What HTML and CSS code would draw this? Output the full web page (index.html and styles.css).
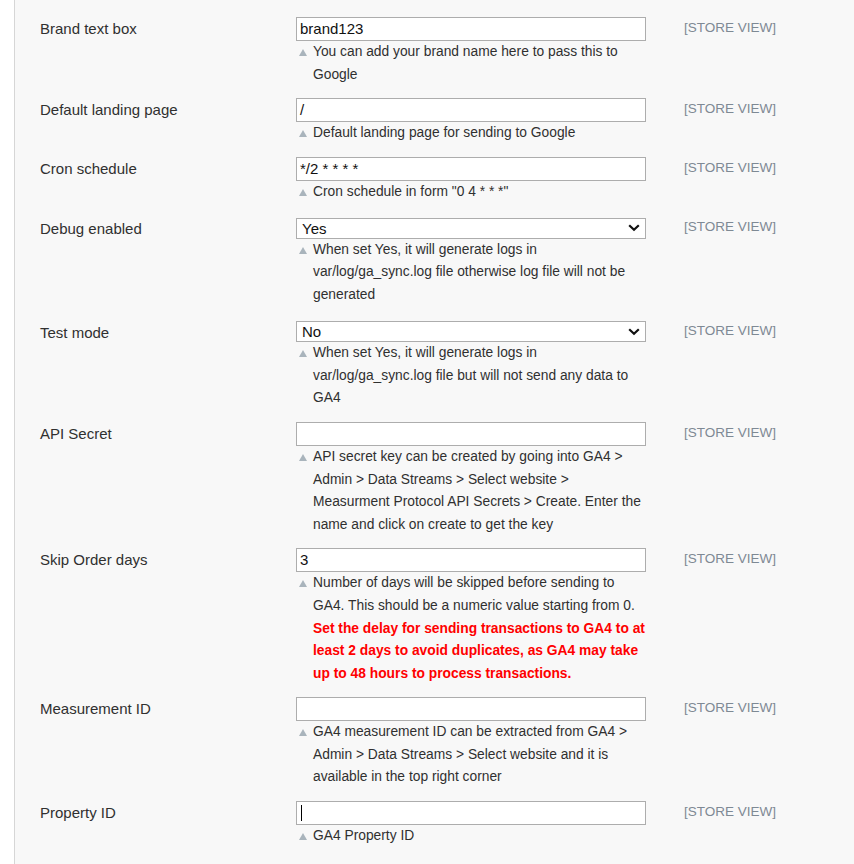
FILE: index.html
```html
<!DOCTYPE html>
<html>
<head>
<meta charset="utf-8">
<link rel="stylesheet" href="styles.css">
</head>
<body>
<div class="panel">
  <div class="row">
    <div class="label">Brand text box</div>
    <div class="control">
      <div class="input">brand123</div>
      <p class="note">You can add your brand name here to pass this to Google</p>
    </div>
    <div class="scope">[STORE VIEW]</div>
  </div>
  <div class="row">
    <div class="label">Default landing page</div>
    <div class="control">
      <div class="input">/</div>
      <p class="note">Default landing page for sending to Google</p>
    </div>
    <div class="scope">[STORE VIEW]</div>
  </div>
  <div class="row">
    <div class="label">Cron schedule</div>
    <div class="control">
      <div class="input">*/2 * * * *</div>
      <p class="note">Cron schedule in form "0 4 * * *"</p>
    </div>
    <div class="scope">[STORE VIEW]</div>
  </div>
  <div class="row row-select">
    <div class="label">Debug enabled</div>
    <div class="control">
      <div class="select"><span>Yes</span><svg class="chev" width="12" height="8" viewBox="0 0 12 8"><path d="M1.2 1.2 L6 5.8 L10.8 1.2" fill="none" stroke="#111" stroke-width="2.2"/></svg></div>
      <p class="note">When set Yes, it will generate logs in var/log/ga_sync.log file otherwise log file will not be generated</p>
    </div>
    <div class="scope">[STORE VIEW]</div>
  </div>
  <div class="row row-select">
    <div class="label">Test mode</div>
    <div class="control">
      <div class="select"><span>No</span><svg class="chev" width="12" height="8" viewBox="0 0 12 8"><path d="M1.2 1.2 L6 5.8 L10.8 1.2" fill="none" stroke="#111" stroke-width="2.2"/></svg></div>
      <p class="note">When set Yes, it will generate logs in var/log/ga_sync.log file but will not send any data to GA4</p>
    </div>
    <div class="scope">[STORE VIEW]</div>
  </div>
  <div class="row">
    <div class="label">API Secret</div>
    <div class="control">
      <div class="input"></div>
      <p class="note">API secret key can be created by going into GA4 &gt; Admin &gt; Data Streams &gt; Select website &gt; Measurment Protocol API Secrets &gt; Create. Enter the name and click on create to get the key</p>
    </div>
    <div class="scope">[STORE VIEW]</div>
  </div>
  <div class="row">
    <div class="label">Skip Order days</div>
    <div class="control">
      <div class="input">3</div>
      <p class="note">Number of days will be skipped before sending to GA4. This should be a numeric value starting from 0. <strong class="warn">Set the delay for sending transactions to GA4 to at least 2 days to avoid duplicates, as GA4 may take up to 48 hours to process transactions.</strong></p>
    </div>
    <div class="scope">[STORE VIEW]</div>
  </div>
  <div class="row">
    <div class="label">Measurement ID</div>
    <div class="control">
      <div class="input"></div>
      <p class="note">GA4 measurement ID can be extracted from GA4 &gt; Admin &gt; Data Streams &gt; Select website and it is available in the top right corner</p>
    </div>
    <div class="scope">[STORE VIEW]</div>
  </div>
  <div class="row">
    <div class="label">Property ID</div>
    <div class="control">
      <div class="input"><span class="caret"></span></div>
      <p class="note">GA4 Property ID</p>
    </div>
    <div class="scope">[STORE VIEW]</div>
  </div>
</div>
</body>
</html>
```

FILE: styles.css
```css
html, body {
  margin: 0;
  padding: 0;
  background: #ffffff;
}
body {
  font-family: "Liberation Sans", Arial, sans-serif;
  color: #303030;
  width: 854px;
  height: 864px;
  overflow: hidden;
}
.panel {
  margin-left: 14px;
  border-left: 1px solid #d6d6d6;
  background: #f8f8f8;
  min-height: 864px;
  padding: 17px 0 0 25px;
  box-sizing: border-box;
}
.row {
  display: grid;
  grid-template-columns: 256px 350px 1fr;
  margin-bottom: 12px;
}
.label {
  font-size: 15px;
  line-height: 24px;
}
.control {
  min-width: 0;
}
.input {
  box-sizing: border-box;
  height: 24px;
  border: 1px solid #adadad;
  background: #fff;
  font-size: 15px;
  line-height: 22px;
  padding: 0 3px;
  color: #111;
  display: flex;
  align-items: center;
}
.caret {
  display: inline-block;
  width: 1px;
  height: 16px;
  background: #000;
  margin-left: 1px;
}
.select {
  box-sizing: border-box;
  height: 21px;
  margin-top: 2.5px;
  border: 1px solid #adadad;
  background: #fff;
  font-size: 15px;
  color: #111;
  display: flex;
  align-items: center;
  justify-content: space-between;
  padding: 0 5px 0 5px;
}
.row-select .label {
  line-height: 21px;
  padding-top: 3px;
}
.row-select .scope {
  padding-top: 1px;
}
.note {
  margin: 0;
  position: relative;
  padding-left: 17px;
  font-size: 13.8px;
  line-height: 22.6px;
}
.note::before {
  content: "";
  position: absolute;
  left: 3px;
  top: 8px;
  width: 0;
  height: 0;
  border-left: 4px solid transparent;
  border-right: 4px solid transparent;
  border-bottom: 7px solid #a9b4bc;
}
.warn {
  color: #ff0000;
  font-weight: bold;
}
.scope {
  margin-left: 38px;
  font-size: 13.5px;
  color: #7e8994;
  line-height: 22px;
}
```
